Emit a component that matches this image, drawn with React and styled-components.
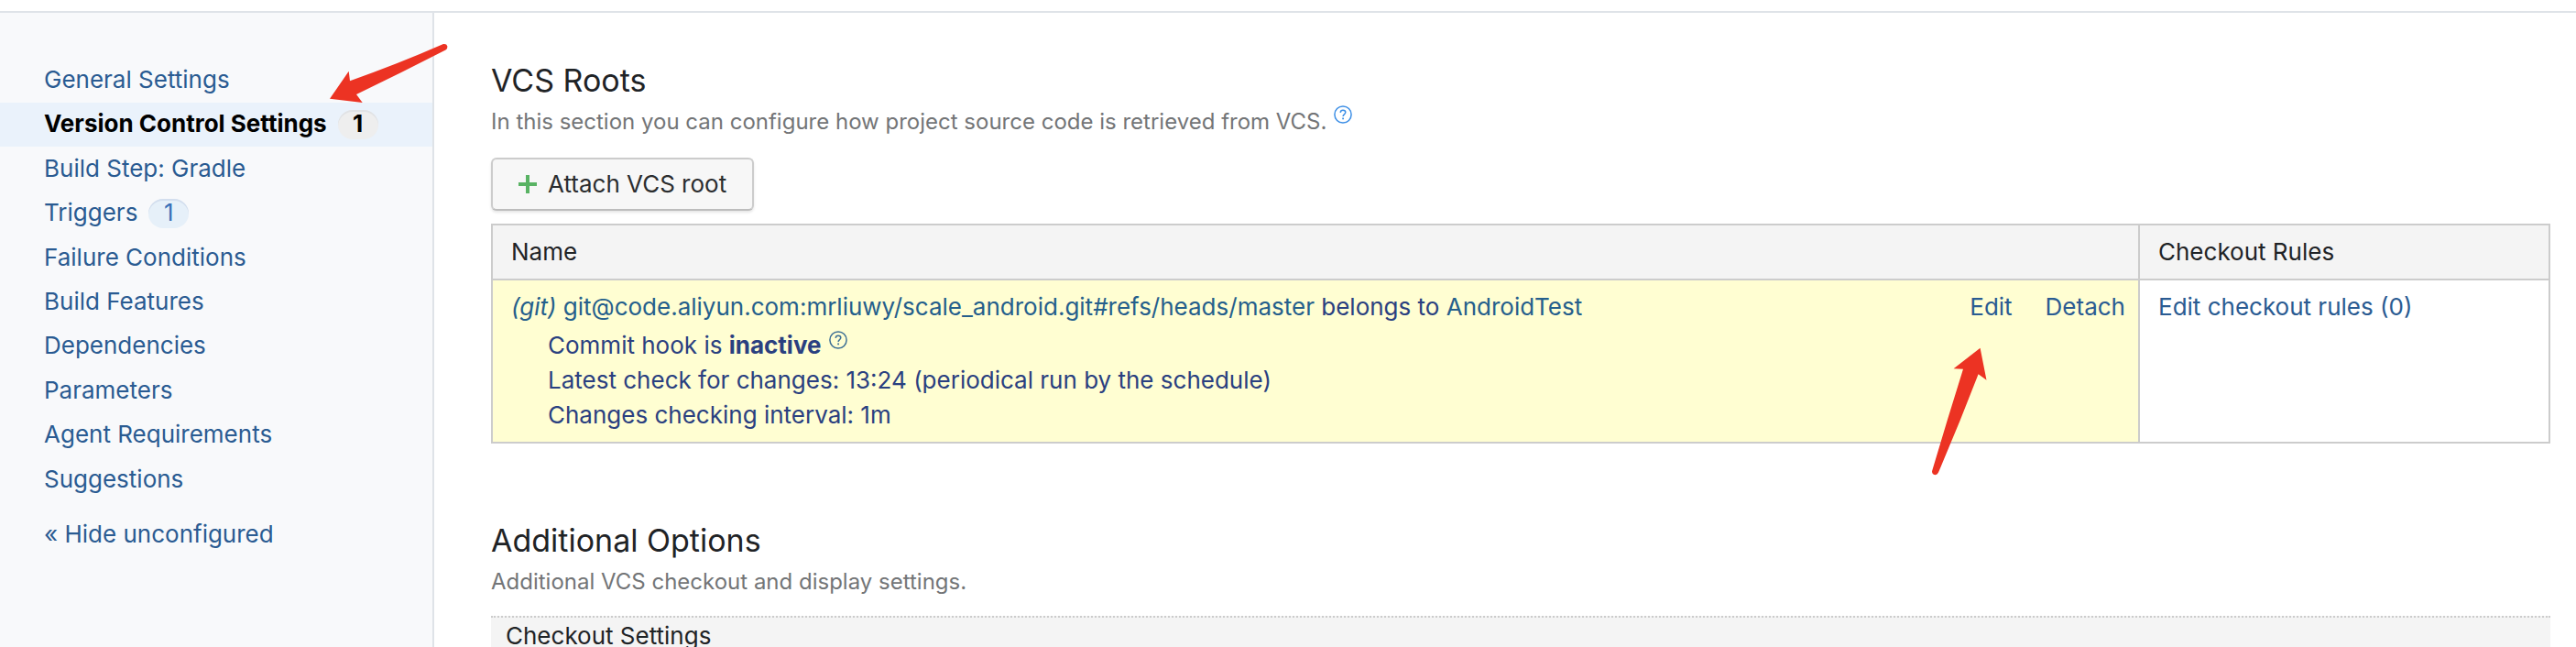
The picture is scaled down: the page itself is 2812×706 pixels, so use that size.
import React from "react";
import styled, { createGlobalStyle } from "styled-components";

const color = {
  link: "#2a5b92",
  text: "#1f2326",
  note: "#737577",
  line: "#cccccc",
  frame: "#dfe3e8",
  panel: "#f4f4f4",
  warn: "#fffed2",
  warnText: "#2a4080",
  arrow: "#ec3323",
};

const GlobalStyle = createGlobalStyle`
  * { box-sizing: border-box; }
  body {
    margin: 0;
    background: #fff;
    color: ${color.text};
    font: 400 26px/38px Inter, "Liberation Sans", sans-serif;
  }
`;

const Page = styled.div`
  display: flex;
  flex-direction: column;
  height: 100vh;
  overflow: hidden;
`;

const TopEdge = styled.div`
  flex: none;
  height: 14px;
  border-bottom: 2px solid ${color.frame};
`;

const Columns = styled.div`
  flex: 1;
  display: flex;
  min-height: 0;
`;

const Sidebar = styled.nav`
  position: relative;
  flex: none;
  width: 474px;
  padding-top: 50px;
  border-right: 2px solid ${color.frame};
  background: #f8f9fb;
`;

const Steps = styled.ul`
  display: grid;
  grid-auto-rows: 1fr;
  min-height: 484px;
  margin: 0 0 12px;
  padding: 0;
  list-style: none;
`;

const Step = styled.a`
  display: flex;
  align-items: center;
  gap: 12px;
  height: 48px;
  padding-left: 48px;
  background: ${(p) => (p.$active ? "#eaf2fb" : "transparent")};
  color: ${(p) => (p.$active ? "#000" : color.link)};
  font-weight: ${(p) => (p.$active ? 700 : 400)};
  text-decoration: none;
`;

const StepLabel = styled.span`
  padding-bottom: 2px;
`;

const Count = styled.span`
  width: 44px;
  padding-bottom: 2px;
  border-radius: 16px;
  background: ${(p) => (p.$active ? "#eeeeee" : "#e6f0f9")};
  box-shadow: inset 0 2px 0 ${(p) => (p.$active ? "#e0e2e5" : "#d3deee")};
  color: ${(p) => (p.$active ? "#000" : "#3a70b8")};
  line-height: 30px;
  text-align: center;
`;

const Main = styled.main`
  flex: 1;
  min-width: 0;
  padding: 50px 28px 0 62px;
`;

const Title = styled.h2`
  margin: 0;
  font-size: 34px;
  font-weight: 400;
  line-height: 48px;
`;

const Note = styled.p`
  display: flex;
  gap: 8px;
  margin: 0;
  color: ${color.note};
  font-size: 24px;
  line-height: 42px;
`;

const HelpLink = styled.a`
  display: inline-flex;
  align-self: flex-start;
  padding-top: 3px;
  color: ${(p) => (p.$muted ? "#3d6f95" : "#3d8fe6")};
`;

const AttachButton = styled.button`
  display: flex;
  align-items: center;
  gap: 12px;
  margin: 18px 0 14px;
  padding: 8px 28px;
  border: 2px solid ${color.line};
  border-bottom-color: #bdbdbd;
  border-radius: 6px;
  background: #f7f7f7;
  box-shadow: 0 2px 3px rgba(0, 0, 0, 0.1);
  color: #2b2d2f;
  font: inherit;
`;

const Roots = styled.table`
  width: 100%;
  border-collapse: collapse;
  table-layout: fixed;
`;

const RulesColumn = styled.col`
  width: 448px;
`;

const HeadCell = styled.th`
  padding: 10px 20px;
  border: 2px solid ${color.line};
  background: ${color.panel};
  font-weight: 400;
  text-align: left;
`;

const Cell = styled.td`
  position: relative;
  padding: 8px 14px 10px 20px;
  border: 2px solid ${color.line};
  background: ${(p) => (p.$warn ? color.warn : "#fff")};
  color: ${color.warnText};
  line-height: 42px;
  vertical-align: top;
`;

const RootLine = styled.div`
  display: flex;
  justify-content: space-between;
`;

const Actions = styled.span`
  display: flex;
  gap: 36px;
`;

const Link = styled.a`
  color: ${(p) => (p.$onWarn ? "#255f8c" : color.link)};
  text-decoration: none;
`;

const Details = styled.div`
  padding: 2px 0 0 40px;
`;

const DetailLine = styled.div`
  display: flex;
  gap: 8px;
  line-height: 38px;
`;

const Strong = styled.strong`
  font-weight: 700;
`;

const Options = styled.section`
  margin-top: 82px;
`;

const OptionsHeader = styled.h3`
  margin: 16px 0 0;
  padding: 0 16px;
  border-top: 2px dotted ${color.line};
  background: ${color.panel};
  font-size: 26px;
  font-weight: 400;
  line-height: 40px;
`;

const SidebarArrow = styled.svg`
  position: absolute;
  top: 32px;
  left: 358px;
`;

const EditArrow = styled.svg`
  position: absolute;
  top: 72px;
  right: 163px;
`;

const HelpIcon = () => (
  <svg width="20" height="20" viewBox="0 0 20 20" fill="none" stroke="currentColor" strokeWidth="1.5" aria-hidden="true">
    <circle cx="10" cy="10" r="9.1" />
    <path d="M7.2 7.9c.1-1.7 1.2-2.7 2.8-2.7s2.8 1 2.8 2.4c0 2-2.7 2-2.7 4.4" />
    <path d="M10.1 13.4v1.8" strokeWidth="1.8" />
  </svg>
);

const PlusIcon = () => (
  <svg width="20" height="20" viewBox="0 0 20 20" aria-hidden="true">
    <path d="M10 0v20M0 10h20" stroke="#59b364" strokeWidth="4" />
  </svg>
);

const steps = [
  { label: "General Settings" },
  { label: "Version Control Settings", count: 1, active: true },
  { label: "Build Step: Gradle" },
  { label: "Triggers", count: 1 },
  { label: "Failure Conditions" },
  { label: "Build Features" },
  { label: "Dependencies" },
  { label: "Parameters" },
  { label: "Agent Requirements" },
  { label: "Suggestions" },
];

export default function App() {
  return (
    <Page>
      <GlobalStyle />
      <TopEdge />
      <Columns>
        <Sidebar aria-label="Build configuration">
          <Steps>
            {steps.map(({ label, count, active }) => (
              <li key={label}>
                <Step href="#" $active={active} aria-current={active ? "page" : undefined}>
                  <StepLabel>{label}</StepLabel>
                  {count && <Count $active={active}>{count}</Count>}
                </Step>
              </li>
            ))}
          </Steps>
          <Step href="#">
            <StepLabel>« Hide unconfigured</StepLabel>
          </Step>
          <SidebarArrow width="132" height="68" viewBox="358 46 132 68" aria-hidden="true">
            <path
              fill={color.arrow}
              d="M360 107.7 380.7 77.7 382 88.3Q434 70 484 48.1Q487.500 47.600 488.400 50.500Q488.700 53.500 486.500 54.500Q437 80 389 102.900L395.700 112Z"
            />
          </SidebarArrow>
        </Sidebar>
        <Main>
          <section>
            <Title>VCS Roots</Title>
            <Note>
              In this section you can configure how project source code is retrieved from VCS.
              <HelpLink href="#" aria-label="Help on VCS roots">
                <HelpIcon />
              </HelpLink>
            </Note>
            <AttachButton type="button">
              <PlusIcon />
              Attach VCS root
            </AttachButton>
            <Roots>
              <colgroup>
                <col />
                <RulesColumn />
              </colgroup>
              <thead>
                <tr>
                  <HeadCell>Name</HeadCell>
                  <HeadCell>Checkout Rules</HeadCell>
                </tr>
              </thead>
              <tbody>
                <tr>
                  <Cell $warn>
                    <RootLine>
                      <span>
                        <Link href="#" $onWarn>
                          <em>(git)</em> git@code.aliyun.com:mrliuwy/scale_android.git#refs/heads/master
                        </Link>{" "}
                        belongs to{" "}
                        <Link href="#" $onWarn>AndroidTest</Link>
                      </span>
                      <Actions>
                        <Link href="#">Edit</Link>
                        <Link href="#">Detach</Link>
                      </Actions>
                    </RootLine>
                    <Details>
                      <DetailLine>
                        <span>
                          Commit hook is <Strong>inactive</Strong>
                        </span>
                        <HelpLink href="#" $muted aria-label="Help on commit hooks">
                          <HelpIcon />
                        </HelpLink>
                      </DetailLine>
                      <DetailLine>Latest check for changes: 13:24 (periodical run by the schedule)</DetailLine>
                      <DetailLine>Changes checking interval: 1m</DetailLine>
                    </Details>
                    <EditArrow width="64" height="142" viewBox="2107 378 64 142" aria-hidden="true">
                      <path
                        fill={color.arrow}
                        d="M2161.600 379.700 2132.600 402.300 2143 402.700Q2125 460 2109 514.300Q2109 517.600 2112.400 518.200Q2114.900 518 2116 515.500Q2139 462 2159.600 408.300L2168.500 414.700Z"
                      />
                    </EditArrow>
                  </Cell>
                  <Cell>
                    <Link href="#">Edit checkout rules (0)</Link>
                  </Cell>
                </tr>
              </tbody>
            </Roots>
          </section>
          <Options>
            <Title>Additional Options</Title>
            <Note>Additional VCS checkout and display settings.</Note>
            <OptionsHeader>Checkout Settings</OptionsHeader>
          </Options>
        </Main>
      </Columns>
    </Page>
  );
}
